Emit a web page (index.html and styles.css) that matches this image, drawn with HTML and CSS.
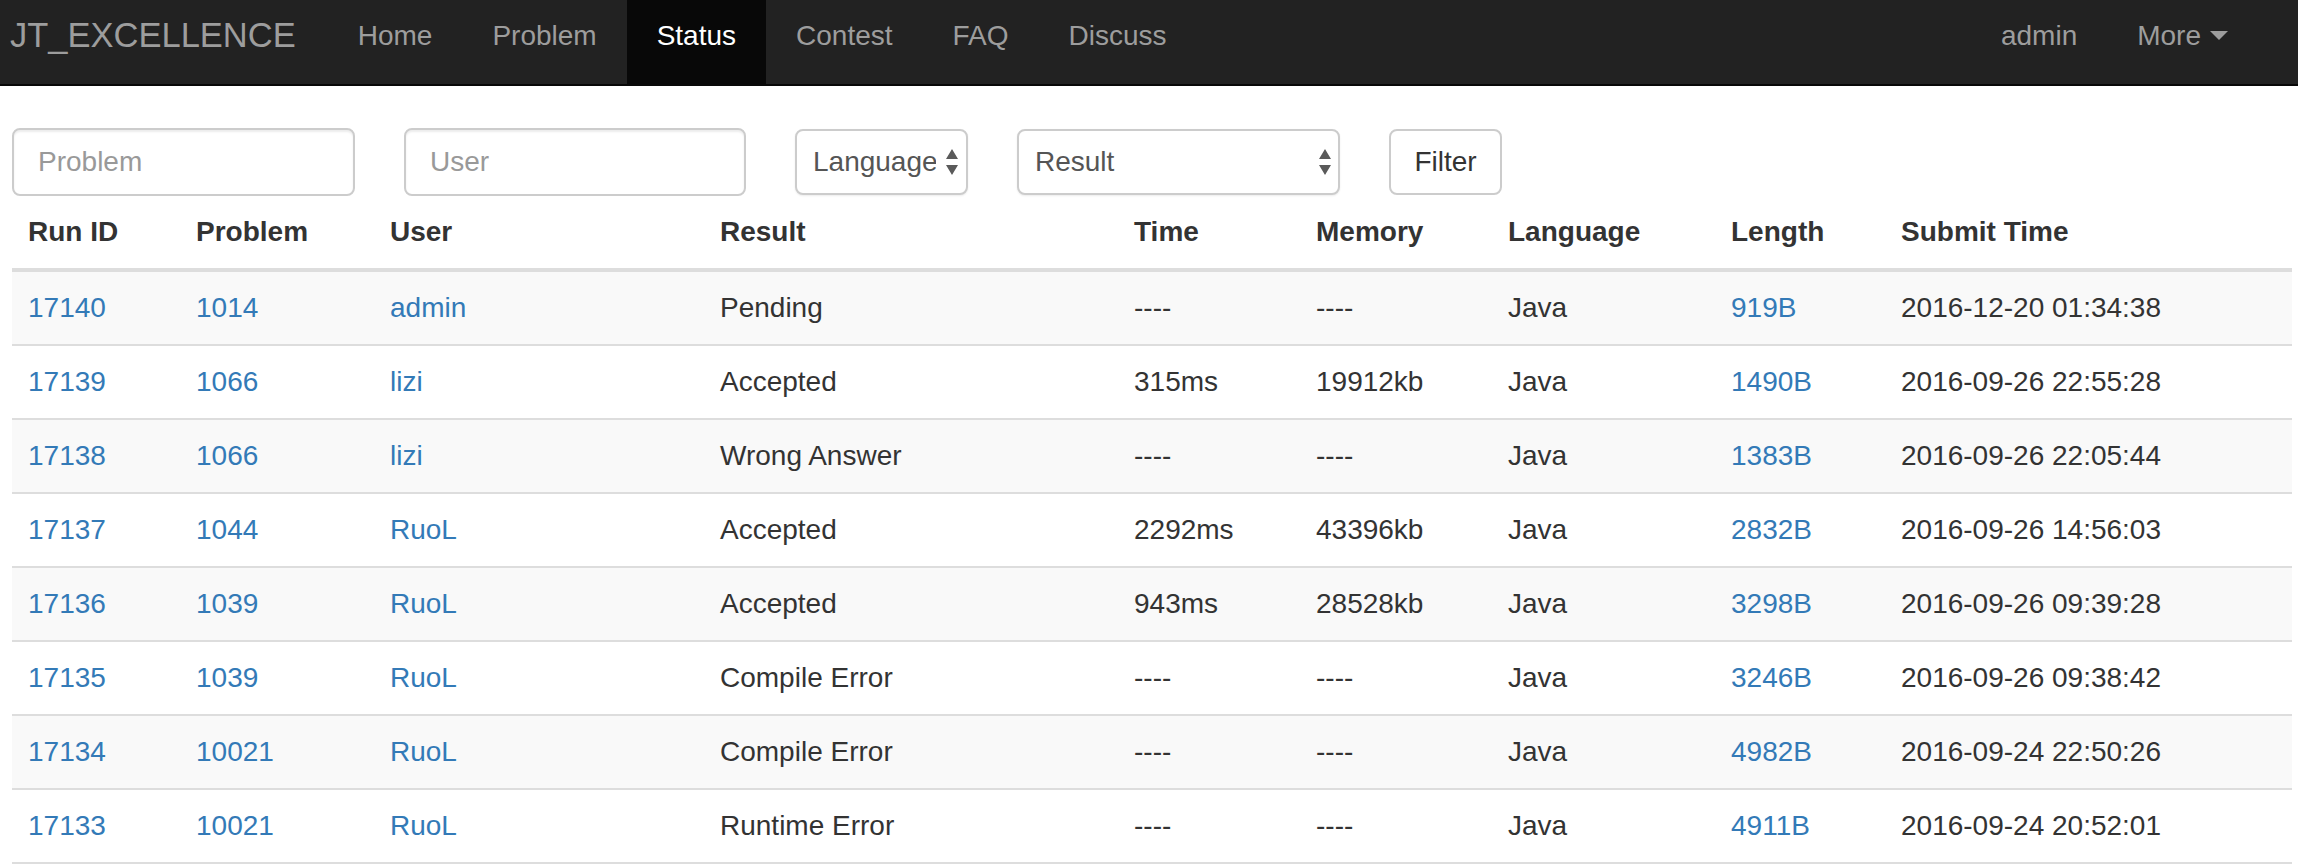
FILE: index.html
```html
<!DOCTYPE html>
<html lang="en">
<head>
<meta charset="utf-8">
<title>Status - JT_EXCELLENCE</title>
<link rel="stylesheet" href="styles.css">
</head>
<body>
<nav class="navbar">
  <a class="brand" href="#">JT_EXCELLENCE</a>
  <ul class="nav">
    <li><a href="#">Home</a></li>
    <li><a href="#">Problem</a></li>
    <li class="active"><a href="#">Status</a></li>
    <li><a href="#">Contest</a></li>
    <li><a href="#">FAQ</a></li>
    <li><a href="#">Discuss</a></li>
  </ul>
  <ul class="nav nav-right">
    <li><a href="#">admin</a></li>
    <li><a href="#">More<span class="caret"></span></a></li>
  </ul>
</nav>

<main class="container">
  <form class="filter">
    <input class="control input-problem" type="text" placeholder="Problem">
    <input class="control input-user" type="text" placeholder="User">
    <span class="select-wrap select-lang">
      <select class="control select"><option>Language</option><option>C</option><option>C++</option><option>Java</option></select>
      <svg class="updown" width="12" height="26" viewBox="0 0 12 26"><path d="M6 0 L12 10 L0 10 Z M0 16 L12 16 L6 26 Z" fill="#5a5a5a"/></svg>
    </span>
    <span class="select-wrap select-result">
      <select class="control select"><option>Result</option><option>Accepted</option><option>Wrong Answer</option></select>
      <svg class="updown" width="12" height="26" viewBox="0 0 12 26"><path d="M6 0 L12 10 L0 10 Z M0 16 L12 16 L6 26 Z" fill="#5a5a5a"/></svg>
    </span>
    <button class="btn" type="button">Filter</button>
  </form>

  <table class="status">
    <colgroup>
      <col class="c-id"><col class="c-prob"><col class="c-user"><col class="c-res"><col class="c-time"><col class="c-mem"><col class="c-lang"><col class="c-len"><col>
    </colgroup>
    <thead>
      <tr><th>Run ID</th><th>Problem</th><th>User</th><th>Result</th><th>Time</th><th>Memory</th><th>Language</th><th>Length</th><th>Submit Time</th></tr>
    </thead>
    <tbody>
      <tr><td><a href="#">17140</a></td><td><a href="#">1014</a></td><td><a href="#">admin</a></td><td>Pending</td><td>----</td><td>----</td><td>Java</td><td><a href="#">919B</a></td><td>2016-12-20 01:34:38</td></tr>
      <tr><td><a href="#">17139</a></td><td><a href="#">1066</a></td><td><a href="#">lizi</a></td><td>Accepted</td><td>315ms</td><td>19912kb</td><td>Java</td><td><a href="#">1490B</a></td><td>2016-09-26 22:55:28</td></tr>
      <tr><td><a href="#">17138</a></td><td><a href="#">1066</a></td><td><a href="#">lizi</a></td><td>Wrong Answer</td><td>----</td><td>----</td><td>Java</td><td><a href="#">1383B</a></td><td>2016-09-26 22:05:44</td></tr>
      <tr><td><a href="#">17137</a></td><td><a href="#">1044</a></td><td><a href="#">RuoL</a></td><td>Accepted</td><td>2292ms</td><td>43396kb</td><td>Java</td><td><a href="#">2832B</a></td><td>2016-09-26 14:56:03</td></tr>
      <tr><td><a href="#">17136</a></td><td><a href="#">1039</a></td><td><a href="#">RuoL</a></td><td>Accepted</td><td>943ms</td><td>28528kb</td><td>Java</td><td><a href="#">3298B</a></td><td>2016-09-26 09:39:28</td></tr>
      <tr><td><a href="#">17135</a></td><td><a href="#">1039</a></td><td><a href="#">RuoL</a></td><td>Compile Error</td><td>----</td><td>----</td><td>Java</td><td><a href="#">3246B</a></td><td>2016-09-26 09:38:42</td></tr>
      <tr><td><a href="#">17134</a></td><td><a href="#">10021</a></td><td><a href="#">RuoL</a></td><td>Compile Error</td><td>----</td><td>----</td><td>Java</td><td><a href="#">4982B</a></td><td>2016-09-24 22:50:26</td></tr>
      <tr><td><a href="#">17133</a></td><td><a href="#">10021</a></td><td><a href="#">RuoL</a></td><td>Runtime Error</td><td>----</td><td>----</td><td>Java</td><td><a href="#">4911B</a></td><td>2016-09-24 20:52:01</td></tr>
    </tbody>
  </table>
</main>
</body>
</html>
```

FILE: styles.css
```css
* { box-sizing: border-box; }

html, body {
  margin: 0;
  padding: 0;
  background: #fff;
  font-family: "Liberation Sans", Arial, Helvetica, sans-serif;
  font-size: 28px;
  line-height: 40px;
  color: #333;
}

a { color: #337ab7; text-decoration: none; }

/* ---------- navbar ---------- */
.navbar {
  display: flex;
  align-items: flex-start;
  height: 86px;
  background: #222;
  border-bottom: 2px solid #080808;
}

.brand {
  display: block;
  padding: 15px 32px 29px 10px;
  font-size: 34.5px;
  line-height: 40px;
  color: #9d9d9d;
}

.nav {
  display: flex;
  margin: 0;
  padding: 0;
  list-style: none;
}

.nav li a {
  display: block;
  padding: 16px 30px 28px;
  line-height: 40px;
  font-size: 28px;
  color: #9d9d9d;
}

.nav li.active a {
  background: #080808;
  color: #fff;
}

.nav-right {
  margin-left: auto;
  padding-right: 40px;
}

.caret {
  display: inline-block;
  width: 0;
  height: 0;
  margin-left: 9px;
  vertical-align: middle;
  border-top: 9px solid #9d9d9d;
  border-left: 9px solid transparent;
  border-right: 9px solid transparent;
  position: relative;
  top: -2px;
}

/* ---------- page ---------- */
.container {
  padding: 42px 6px 0 12px;
}

.filter {
  display: flex;
  align-items: flex-start;
  gap: 49px;
}

.control {
  height: 68px;
  margin: 0;
  padding: 12px 24px;
  font-family: inherit;
  font-size: 28px;
  line-height: 40px;
  color: #555;
  background: #fff;
  border: 2px solid #ccc;
  border-radius: 8px;
  box-shadow: inset 0 2px 2px rgba(0, 0, 0, .075);
  outline: none;
}

.control::placeholder { color: #999; }

.input-problem { width: 343px; }
.input-user { width: 342px; }

.select-wrap {
  position: relative;
  display: block;
  margin-top: 1px;
}

.select {
  -webkit-appearance: none;
  appearance: none;
  display: block;
  width: 100%;
  height: 66px;
  padding: 11px 30px 11px 16px;
  box-shadow: 0 1px 2px rgba(0, 0, 0, .08);
}

.select-lang { width: 173px; }
.select-result { width: 323px; }

.updown {
  position: absolute;
  top: 20px;
  right: 10px;
  pointer-events: none;
}

.select-result .updown { right: 9px; }

.btn {
  width: 113px;
  height: 66px;
  margin: 1px 0 0;
  padding: 11px 0;
  font-family: inherit;
  font-size: 28px;
  line-height: 40px;
  color: #333;
  background: #fff;
  border: 2px solid #ccc;
  border-radius: 8px;
}

/* ---------- table ---------- */
.status {
  width: 100%;
  table-layout: fixed;
  border-collapse: separate;
  border-spacing: 0;
}

.c-id { width: 168px; }
.c-prob { width: 194px; }
.c-user { width: 330px; }
.c-res { width: 414px; }
.c-time { width: 182px; }
.c-mem { width: 192px; }
.c-lang { width: 223px; }
.c-len { width: 170px; }

.status th,
.status td {
  padding: 16px;
  line-height: 40px;
  text-align: left;
  vertical-align: top;
  white-space: nowrap;
}

.status th {
  font-weight: bold;
  border-bottom: 4px solid #ddd;
}

.status td {
  border-top: 2px solid #ddd;
}

.status tbody tr:first-child td {
  border-top: 0;
}

.status tbody tr:last-child td {
  border-bottom: 2px solid #ddd;
}

.status tbody tr:nth-child(odd) td {
  background: #f9f9f9;
}
```
